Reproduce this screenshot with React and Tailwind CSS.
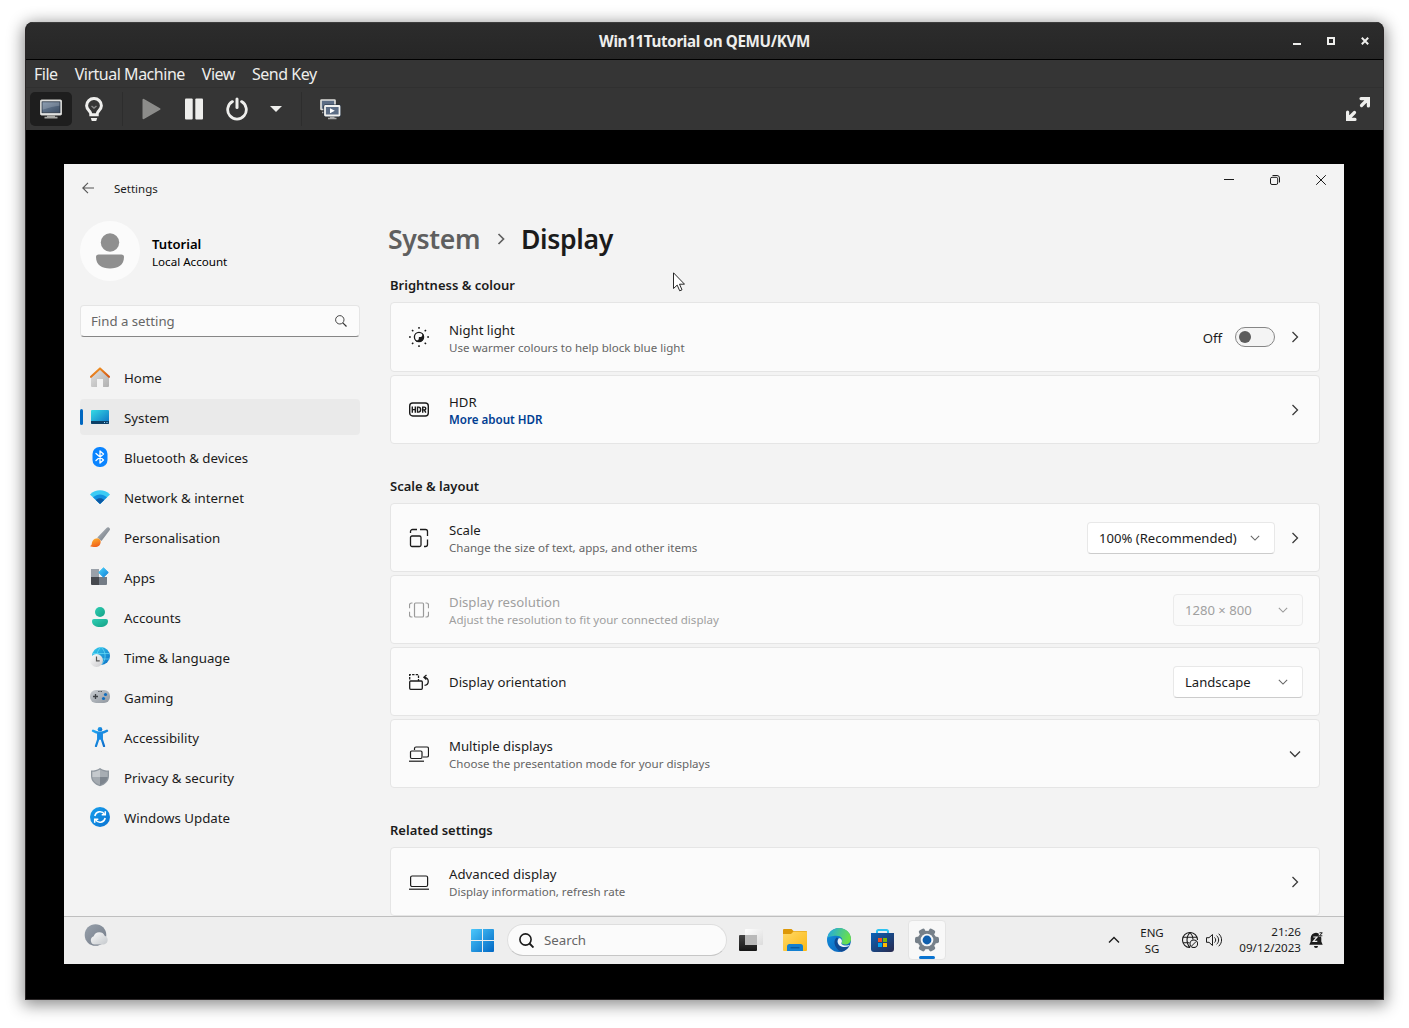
import React from "react";

const Svg = ({ s = 20, w, h, vb, className = "", children }) => (
  <svg width={w || s} height={h || s} viewBox={vb || `0 0 ${w || s} ${h || s}`} className={`block shrink-0 ${className}`} fill="none">
    {children}
  </svg>
);

const Grad = ({ id, from, to, x2 = 1, y2 = 1 }) => (
  <linearGradient id={id} x1="0" y1="0" x2={x2} y2={y2}>
    <stop offset="0" stopColor={from} />
    <stop offset="1" stopColor={to} />
  </linearGradient>
);

/* Host window: title bar, menu and toolbar */

function TitleBar() {
  return (
    <div className="flex h-[38px] shrink-0 items-center border-b border-black border-t border-t-[#3d3d3d] bg-linear-to-b from-[#2c2c2c] to-[#262626]">
      <div className="w-[120px]" />
      <div className="flex-1 text-center font-['Noto_Sans'] text-[15.2px] leading-5 font-bold tracking-[-0.35px] text-[#eeeeec]">Win11Tutorial on QEMU/KVM</div>
      <div className="flex w-[120px] justify-end gap-[26px] pr-3.5">
        <Svg s={8}><path d="M0 7h8" stroke="#eeeeec" strokeWidth="2" /></Svg>
        <Svg s={8}><path d="M1 1h6v6h-6z" stroke="#eeeeec" strokeWidth="2" /></Svg>
        <Svg s={8}><path d="M.8 .8l6.4 6.4M7.2 .8L.8 7.2" stroke="#eeeeec" strokeWidth="2" /></Svg>
      </div>
    </div>
  );
}

function MenuBar() {
  return (
    <div className="flex h-7 shrink-0 items-center gap-[17px] border-b border-[#303030] bg-[#353535] pl-2 font-['Noto_Sans'] text-[16px] leading-5 tracking-[-0.48px] text-[#eeeeec]">
      <span>File</span>
      <span>Virtual Machine</span>
      <span>View</span>
      <span>Send Key</span>
    </div>
  );
}

function ToolBar() {
  return (
    <div className="flex h-[42px] shrink-0 items-center bg-[#353535] pr-[13px] pl-1">
      <div className="flex h-[34px] w-[42px] items-center justify-center rounded-[5px] bg-[#1e1e1e]">
        <Svg w={22} h={20}>
          <defs><Grad id="mon" from="#7488a0" to="#3c4d63" /></defs>
          <rect x=".5" y="1" width="21" height="15" rx="1" fill="#f2f2f0" stroke="#d0d0cd" />
          <rect x="2" y="2.8" width="18" height="11" fill="url(#mon)" stroke="#2a3442" strokeWidth=".8" />
          <path d="M2.5 3.200h17v3.600c-5 .5-10 1.500-17 4z" fill="#fff" opacity=".18" />
          <path d="M7 16.500h8v1.200h2.500v1.800h-13v-1.800H7z" fill="#a9a9a6" />
        </Svg>
      </div>
      <Svg w={18} h={24} className="ml-[13px]">
        <path d="M9 1.600a7.200 7.200 0 0 0-7.400 7.200c0 3 2.200 4.500 3.500 6.200.6.900.7 1.800.7 2.800h6.400c0-1 .1-1.900.7-2.800 1.300-1.700 3.500-3.200 3.500-6.200A7.200 7.200 0 0 0 9 1.600z" stroke="#eeeeec" strokeWidth="3" />
        <path d="M6.500 9L9 11l2.500-2" stroke="#888" strokeWidth="1.500" />
        <path d="M5.800 21h6.400l-1 3H6.800z" fill="#eeeeec" />
      </Svg>
      <div className="ml-[19px] h-[34px] w-px bg-[#2d2d2d]" />
      <Svg w={20} h={22} className="ml-[19px]">
        <path d="M1.500 1.800v18.400L17.500 11z" fill="#8c8c8a" stroke="#8c8c8a" strokeWidth="2" strokeLinejoin="round" />
      </Svg>
      <Svg w={18} h={22} className="ml-[23px]">
        <rect y=".5" width="7.700" height="21" rx="1" fill="#eeeeec" />
        <rect x="10.300" y=".5" width="7.700" height="21" rx="1" fill="#eeeeec" />
      </Svg>
      <Svg w={22} h={24} className="ml-[23px]">
        <path d="M6.500 4.600a9.300 9.300 0 1 0 9 0" stroke="#eeeeec" strokeWidth="2.800" strokeLinecap="round" />
        <path d="M11 2v8.500" stroke="#eeeeec" strokeWidth="3" strokeLinecap="round" />
      </Svg>
      <Svg w={12} h={6} className="ml-[22px]"><path d="M0 0h12L6 6z" fill="#eeeeec" /></Svg>
      <div className="ml-[19px] h-[34px] w-px bg-[#2d2d2d]" />
      <Svg w={22} h={22} className="ml-[17px]">
        <rect x="2" y="2" width="14" height="9.500" rx=".5" fill="#5c6d85" stroke="#dededb" strokeWidth="1.700" />
        <path d="M3 14.500h3" stroke="#aaa" strokeWidth="1.500" />
        <rect x="6" y="8" width="14.500" height="9.500" rx=".5" fill="#5c6d85" stroke="#25303e" strokeWidth="3.200" />
        <rect x="6" y="8" width="14.500" height="9.500" rx=".5" fill="#5c6d85" stroke="#f2f2f0" strokeWidth="1.800" />
        <path d="M11 10.200v5l4.800-2.500z" fill="#fff" />
        <path d="M11 18.500h4.500v1.200h2V21.200H9v-1.500h2z" fill="#aaa" />
      </Svg>
      <Svg s={24} className="ml-auto">
        <path d="M15 1.600h7.400V9M21.500 2.500L15.500 8.500" stroke="#eeeeec" strokeWidth="3.200" strokeLinecap="round" />
        <path d="M1.600 15v7.400H9M2.500 21.500L8.500 15.500" stroke="#eeeeec" strokeWidth="3.200" strokeLinecap="round" />
      </Svg>
    </div>
  );
}

/* Sidebar icons */

const navIcons = {
  Home: (
    <Svg>
      <defs><Grad id="h1" from="#e2e2e2" to="#b0b0b0" /><Grad id="h2" from="#f59a23" to="#d25716" /></defs>
      <path d="M10 2l9 8v9a1 1 0 0 1-1 1h-5v-8H7v8H2a1 1 0 0 1-1-1v-9z" fill="url(#h1)" />
      <path d="M1 9.800L10 1.400l9 8.400" stroke="url(#h2)" strokeWidth="2.100" strokeLinecap="round" strokeLinejoin="round" />
    </Svg>
  ),
  System: (
    <Svg>
      <defs><Grad id="s1" from="#35dbe4" to="#0c6fc4" /></defs>
      <rect x="1" y="3" width="18" height="14" rx="1" fill="url(#s1)" />
      <path d="M1 14h18v2a1 1 0 0 1-1 1H2a1 1 0 0 1-1-1z" fill="#0c3f66" />
      <path d="M14 15.500h1M16.500 15.500h1" stroke="#9fdcff" />
    </Svg>
  ),
  "Bluetooth & devices": (
    <Svg>
      <rect x="2.500" width="15" height="20" rx="7" fill="#0a84ff" />
      <path d="M6 6.500l7.500 6.500L10 16V4l3.500 3L6 13.500" stroke="#fff" strokeWidth="1.300" strokeLinejoin="round" strokeLinecap="round" />
    </Svg>
  ),
  "Network & internet": (
    <Svg>
      <path d="M0 7.500C5.500 1.900 14.500 1.900 20 7.500L10 17z" fill="#3ccbf4" />
      <path d="M3 10.300c4-3.900 10-3.900 14 0L10 17z" fill="#1290df" />
      <path d="M5.800 13c2.400-2.300 6-2.300 8.400 0L10 17z" fill="#0c59a4" />
    </Svg>
  ),
  Personalisation: (
    <Svg>
      <defs><Grad id="p1" from="#b9bec4" to="#6b737c" /><Grad id="p2" from="#ffb52e" to="#f0641c" x2={0.4} /></defs>
      <path d="M18.800.5c1.200.7 1.500 1.600.8 2.800L11.500 14 7.300 10.500 16.500 1c.8-.8 1.500-1 2.300-.5z" fill="url(#p1)" />
      <path d="M6.500 11.500c1.300-.6 4.300 1 4.200 3.200C10.500 18 8.500 20 5 20c-2 0-4-.3-5-1 2-.5 1.500-1.500 2-3.500s2.200-4 4.500-4z" fill="url(#p2)" />
    </Svg>
  ),
  Apps: (
    <Svg>
      <defs><Grad id="a1" from="#48d2fa" to="#0f7fd8" /></defs>
      <path d="M1 2h8v8H1z" fill="#9aa1a9" /><path d="M1 10h8v8H2a1 1 0 0 1-1-1z" fill="#46494e" />
      <path d="M9 10h8v7a1 1 0 0 1-1 1H9z" fill="#747c86" />
      <path d="M13.500.8l4.800 4.700-4.800 4.700-4.800-4.700z" fill="url(#a1)" stroke="url(#a1)" strokeLinejoin="round" />
    </Svg>
  ),
  Accounts: (
    <Svg>
      <defs><Grad id="c1" from="#2fcfb4" to="#14a085" /></defs>
      <circle cx="10" cy="5" r="5" fill="url(#c1)" />
      <path d="M4 12h12a2 2 0 0 1 2 2c0 4-3.500 6-8 6s-8-2-8-6a2 2 0 0 1 2-2z" fill="url(#c1)" />
    </Svg>
  ),
  "Time & language": (
    <Svg>
      <defs><Grad id="t1" from="#38d0ee" to="#0b6cc4" /><Grad id="t2" from="#fff" to="#c9c9cc" /></defs>
      <circle cx="11" cy="9" r="9" fill="url(#t1)" />
      <path d="M3 6.500h16.500M3 12h16.500M11 0c-5.500 5-5.500 13 0 18M11 0c5.500 5 5.500 13 0 18" stroke="#6fe3fa" strokeWidth=".9" opacity=".7" />
      <circle cx="6.500" cy="13.500" r="6.500" fill="url(#t2)" />
      <path d="M6.500 9.500v4.300h3.200" stroke="#555" strokeWidth="1.200" />
    </Svg>
  ),
  Gaming: (
    <Svg>
      <defs><Grad id="g1" from="#c9cdd2" to="#8f969e" /></defs>
      <rect y="3" width="20" height="13" rx="6" fill="url(#g1)" />
      <path d="M5.500 7v5M3 9.500h5" stroke="#3d4146" strokeWidth="1.300" />
      <path d="M8.300 4.500h1.200M10.600 4.500h1.200" stroke="#3d4146" />
      <circle cx="15.500" cy="7.500" r="1.600" fill="#0f6cbd" /><circle cx="13.500" cy="11.500" r="1.600" fill="#0f6cbd" />
    </Svg>
  ),
  Accessibility: (
    <Svg>
      <defs><Grad id="ac" from="#22a6f2" to="#0a68c8" /></defs>
      <circle cx="10" cy="2.300" r="2.300" fill="url(#ac)" />
      <path d="M3 3.800c2 1.300 4.500 2 7 2s5-.7 7-2M8.300 6.500V12L6 19M11.700 6.500V12L14 19" stroke="url(#ac)" strokeWidth="2.300" strokeLinecap="round" strokeLinejoin="round" />
      <path d="M7.300 5.500h5.400v8L10 12.500l-2.700 1z" fill="#1a8be2" />
    </Svg>
  ),
  "Privacy & security": (
    <Svg>
      <path d="M10 1c2.500 2 5.500 2.500 9 2.500V9c0 5-3.500 8.500-9 10.300C4.500 17.500 1 14 1 9V3.500C4.500 3.500 7.500 3 10 1z" fill="#8e969e" />
      <path d="M10 2.500C7.500 4.200 5 4.700 2.300 4.800V10H10z" fill="#c5c9cd" />
      <path d="M10 2.500c2.500 1.700 5 2.200 7.700 2.300V10H10z" fill="#a7adb3" />
      <path d="M2.400 10H10v8C5.500 16.300 2.700 13.500 2.400 10z" fill="#a4aab0" />
      <path d="M17.600 10H10v8c4.500-1.700 7.300-4.500 7.600-8z" fill="#7d858e" />
    </Svg>
  ),
  "Windows Update": (
    <Svg>
      <defs><Grad id="w1" from="#18a0ec" to="#0a72d2" /></defs>
      <circle cx="10" cy="10" r="10" fill="url(#w1)" />
      <path d="M4.800 9A5.300 5.300 0 0 1 14.500 7.300M15.200 11a5.300 5.300 0 0 1-9.700 1.700" stroke="#fff" strokeWidth="1.500" />
      <path d="M15.300 4.200v3.600h-3.600M4.700 15.800v-3.600h3.600" stroke="#fff" strokeWidth="1.500" />
    </Svg>
  ),
};

function Sidebar() {
  return (
    <aside className="flex w-[280px] shrink-0 flex-col">
      <div className="flex h-[60px] items-center gap-3">
        <div className="flex size-[60px] items-center justify-center rounded-full bg-[#fbfbfb]">
          <Svg w={28} h={36}>
            <circle cx="14" cy="9.500" r="9.200" fill="#8f8f8f" />
            <path d="M2.500 21.500h23a2.500 2.500 0 0 1 2.500 2.500c0 8-6 11.500-14 11.500S0 32 0 24a2.500 2.500 0 0 1 2.500-2.500z" fill="#8f8f8f" />
          </Svg>
        </div>
        <div className="flex flex-col pt-[3px]">
          <span className="text-[13.100px] leading-[18px] font-semibold text-black">Tutorial</span>
          <span className="text-[11.600px] leading-[17px] text-black">Local Account</span>
        </div>
      </div>
      <div className="mt-6 flex h-8 items-center justify-between rounded-[4px] border border-[#e5e5e5] border-b-[#868686] bg-[#fbfbfb] pr-3 pl-2.5">
        <span className="text-[13.200px] leading-[18px] text-[#666]">Find a setting</span>
        <Svg s={12}><circle cx="4.800" cy="4.800" r="4.200" stroke="#444" /><path d="M7.800 7.800l3.700 3.700" stroke="#333" strokeWidth="1.200" /></Svg>
      </div>
      <nav className="mt-[22px] flex flex-col gap-1">
        {Object.keys(navIcons).map((label) => (
          <div key={label} className={`flex h-9 items-center rounded-[4px] ${label === "System" ? "bg-[#eaeaea]" : ""}`}>
            <div className={`h-4 w-[3px] rounded-full ${label === "System" ? "bg-[#0067c0]" : ""}`} />
            <div className="mr-3.5 ml-[7px]">{navIcons[label]}</div>
            <span className="pt-0.5 text-[13.300px] leading-[18px] whitespace-nowrap text-[#1b1b1b]">{label}</span>
          </div>
        ))}
      </nav>
    </aside>
  );
}

/* Settings cards */

const Right = () => <Svg w={16} h={12}><path d="M5.500 1l5 5-5 5" stroke="#3a3a3a" strokeWidth="1.300" /></Svg>;
const Down = ({ c = "#3a3a3a", s = 12 }) => <Svg s={s} vb="0 0 12 12"><path d="M1 3.500l5 5 5-5" stroke={c} strokeWidth="1.300" /></Svg>;

const Dropdown = ({ label, wide, disabled }) => (
  <div
    className={`flex h-8 items-center justify-between rounded-[4px] border pr-3.5 pl-[11px] ${wide ? "mr-3 w-[188px]" : "w-[130px]"} ${
      disabled ? "border-[#ebebeb] bg-[#fafafa] text-[#a0a0a0]" : "border-[#e8e8e8] border-b-[#cccccc] bg-white text-[#1b1b1b]"
    }`}
  >
    <span className="text-[13.100px] leading-[18px] whitespace-nowrap">{label}</span>
    <Down s={10} c={disabled ? "#9a9a9a" : "#666"} />
  </div>
);

function Card({ icon, title, sub, link, tall, disabled, children }) {
  return (
    <div className={`flex shrink-0 items-center rounded-[4px] border border-[#e5e5e5] bg-[#fbfbfb] pr-4 pl-[18px] ${tall ? "h-[70px]" : "h-[69px]"}`}>
      <div className={tall ? "" : "mt-px"}>{icon}</div>
      <div className={`ml-5 flex flex-1 flex-col ${sub || link ? "pt-0.5" : ""}`}>
        <span className={`text-[13.200px] leading-[18px] ${disabled ? "text-[#9f9f9f]" : "text-[#1b1b1b]"}`}>{title}</span>
        {sub && <span className={`text-[11.550px] leading-[17px] ${disabled ? "text-[#9f9f9f]" : "text-[#666]"}`}>{sub}</span>}
        {link && <span className="text-[11.600px] leading-[17px] font-semibold text-[#003e92]">{link}</span>}
      </div>
      {children}
    </div>
  );
}

const SectionTitle = ({ children }) => (
  <h2 className="flex h-[34px] shrink-0 items-center text-[13px] leading-5 font-semibold text-[#1b1b1b]">{children}</h2>
);

const K = "#1b1b1b";
const NightIcon = (
  <Svg>
    <circle cx="10" cy="10" r="4.600" stroke={K} strokeWidth="1.300" />
    <path d="M13.400 6A5 5 0 1 1 6 13.400c1 .3 2 .2 2.800-.2C10 12.500 9.800 11 9.900 9.900c1.100-.1 2.500.2 3.200-1 .5-.8.600-1.900.3-2.900z" fill={K} />
    <path d="M10 0v1.800M10 18.200V20M0 10h1.800M18.200 10H20M3 3l1.300 1.300M15.700 15.700L17 17M17 3l-1.300 1.300M4.300 15.700L3 17" stroke={K} strokeWidth="1.500" />
  </Svg>
);
const HdrIcon = (
  <Svg>
    <rect x=".7" y="3" width="18.600" height="13" rx="3" stroke={K} strokeWidth="1.400" />
    <path d="M3.300 6.500v6.200M6.300 6.500v6.200M3.300 9.600h3M8.500 7.100v5h1c2.800 0 2.800-5 0-5zM13.700 12.700V7.100h1.600c2 0 2 2.800 0 2.800h-1.600M15.300 9.900l1.500 2.800" stroke={K} strokeWidth="1.400" />
  </Svg>
);
const ScaleIcon = (
  <Svg>
    <rect x="1.500" y="8" width="10.500" height="10.500" rx="1.500" stroke={K} strokeWidth="1.300" />
    <path d="M1.500 5V3.500a2 2 0 0 1 2-2H8M11 1.500h5.500a2 2 0 0 1 2 2V8M18.500 11.500v5a2 2 0 0 1-2 2H15" stroke={K} strokeWidth="1.300" />
  </Svg>
);
const ResIcon = (
  <Svg>
    <rect x="5.500" y="3" width="9" height="14" rx="1" stroke="#9a9a9a" strokeWidth="1.200" />
    <path d="M3.500 3h-1a2 2 0 0 0-2 2v3.200M.5 11.800V15a2 2 0 0 0 2 2h1M16.500 3h1a2 2 0 0 1 2 2v3.200M19.500 11.800V15a2 2 0 0 1-2 2h-1" stroke="#9a9a9a" strokeWidth="1.200" />
  </Svg>
);
const OrientIcon = (
  <Svg>
    <rect x=".7" y="9" width="12.600" height="8.300" rx="1" stroke={K} strokeWidth="1.300" />
    <path d="M.7 7.500V2.700h8.800V9" stroke={K} strokeWidth="1.300" strokeDasharray="2.400 1.200" />
    <path d="M15.500 13.300c5-.5 5-7.300 0-8M17.500 3l-2.600 2.200 2.400 2.400" stroke={K} strokeWidth="1.300" />
  </Svg>
);
const MultiIcon = (
  <Svg>
    <path d="M5.500 6V4.500A1.500 1.500 0 0 1 7 3h11a1.500 1.500 0 0 1 1.500 1.500v7A1.500 1.500 0 0 1 18 13h-4" stroke={K} strokeWidth="1.200" />
    <rect x="1.500" y="7" width="11.500" height="7.500" rx="1.200" stroke={K} strokeWidth="1.200" />
    <path d="M0 17.200h15" stroke={K} strokeWidth="1.200" />
  </Svg>
);
const LaptopIcon = (
  <Svg>
    <rect x="1.600" y="4" width="17" height="10.500" rx="1.500" stroke={K} strokeWidth="1.200" />
    <path d="M0 17.200h20" stroke={K} strokeWidth="1.200" />
  </Svg>
);

function Main() {
  return (
    <main className="flex w-[930px] shrink-0 flex-col">
      <h1 className="-ml-0.5 flex h-[56px] shrink-0 items-center text-[26.600px] font-semibold tracking-[-0.35px] text-[#1b1b1b]">
        <span className="w-[92px] text-[#5f5f5f]">System</span>
        <Svg w={8} h={12} className="mr-4 mb-0.5 ml-[17px]"><path d="M1.500 1l5 5-5 5" stroke="#5f5f5f" strokeWidth="1.700" /></Svg>
        <span>Display</span>
      </h1>
      <SectionTitle>Brightness &amp; colour</SectionTitle>
      <div className="mb-[25px] flex flex-col gap-[3px]">
        <Card tall icon={NightIcon} title="Night light" sub="Use warmer colours to help block blue light">
          <span className="mr-[13px] pt-px text-[13.200px] leading-[18px] text-[#1b1b1b]">Off</span>
          <div className="mr-3 flex h-5 w-10 items-center rounded-full border border-[#868686] bg-[#f4f4f4] pl-[3px]">
            <div className="size-3 rounded-full bg-[#5c5c5c]" />
          </div>
          <Right />
        </Card>
        <Card icon={HdrIcon} title="HDR" link="More about HDR"><Right /></Card>
      </div>
      <SectionTitle>Scale &amp; layout</SectionTitle>
      <div className="mb-[25px] flex flex-col gap-[3px]">
        <Card icon={ScaleIcon} title="Scale" sub="Change the size of text, apps, and other items">
          <Dropdown wide label="100% (Recommended)" />
          <Right />
        </Card>
        <Card disabled icon={ResIcon} title="Display resolution" sub="Adjust the resolution to fit your connected display">
          <Dropdown disabled label="1280 × 800" />
        </Card>
        <Card icon={OrientIcon} title="Display orientation"><Dropdown label="Landscape" /></Card>
        <Card icon={MultiIcon} title="Multiple displays" sub="Choose the presentation mode for your displays">
          <div className="mr-0.5"><Down /></div>
        </Card>
      </div>
      <SectionTitle>Related settings</SectionTitle>
      <Card icon={LaptopIcon} title="Advanced display" sub="Display information, refresh rate"><Right /></Card>
    </main>
  );
}

function Caption() {
  return (
    <div className="flex h-12 shrink-0 pl-[18px]">
      <Svg w={12} h={12} className="mt-[18px]"><path d="M12 6H1M6 .8L.8 6 6 11.200" stroke="#555" strokeWidth="1.100" /></Svg>
      <span className="mt-4 ml-5 text-[11.500px] leading-[17px] text-[#1b1b1b]">Settings</span>
      <div className="mt-[11px] mr-[18px] ml-auto flex gap-9">
        <Svg s={10}><path d="M0 4.500h10" stroke="#1b1b1b" /></Svg>
        <Svg s={10}><rect x=".5" y="2.300" width="7.200" height="7.200" rx="1.500" stroke="#1b1b1b" /><path d="M2.500 .5H7A2.500 2.500 0 0 1 9.500 3v4.500" stroke="#1b1b1b" /></Svg>
        <Svg s={10}><path d="M.2 .2l9.600 9.600M9.800 .2L.2 9.800" stroke="#1b1b1b" /></Svg>
      </div>
    </div>
  );
}

/* Guest taskbar */

function TaskBar() {
  return (
    <div className="flex h-12 shrink-0 items-center border-t border-[#bfbfbf] bg-[#eeeeee] pb-px text-[#1b1b1b]">
      <Svg s={24} className="mb-2 ml-5">
        <defs><Grad id="mo" from="#97a0ab" to="#747c88" /><Grad id="cl" from="#fafafa" to="#c4c8cc" /></defs>
        <circle cx="11.500" cy="11" r="10.800" fill="url(#mo)" />
        <path d="M10.500 20.500a4.300 4.300 0 0 1-.8-8.300 6 6 0 0 1 11-.5 4.600 4.600 0 0 1-.7 8.800z" fill="url(#cl)" />
      </Svg>
      <Svg s={23} className="ml-[363px]">
        <defs><linearGradient id="win" gradientUnits="userSpaceOnUse" x1="0" y1="0" x2="23" y2="23"><stop stopColor="#4cc8fb" /><stop offset="1" stopColor="#0067c4" /></linearGradient></defs>
        <path d="M0 1a1 1 0 0 1 1-1h10v11H0zM12 0h10a1 1 0 0 1 1 1v10H12zM0 12h11v11H1a1 1 0 0 1-1-1zM12 12h11v10a1 1 0 0 1-1 1H12z" fill="url(#win)" />
      </Svg>
      <div className="ml-[13px] flex h-8 w-[220px] items-center rounded-full border border-[#dedede] border-b-[#c6c6c6] bg-[#fbfbfb] pl-[11px]">
        <Svg s={15}><circle cx="6.500" cy="6.500" r="5.600" stroke="#1b1b1b" strokeWidth="1.600" /><path d="M10.500 10.500l4 4" stroke="#1b1b1b" strokeWidth="1.900" /></Svg>
        <span className="ml-2.5 pt-px text-[13.300px] text-[#666]">Search</span>
      </div>
      <Svg w={24} h={22} className="ml-3">
        <defs><Grad id="tv" from="#444" to="#161616" x2={0} /><Grad id="tw" from="#fff" to="#dcdcdc" /></defs>
        <rect y="6" width="18" height="16" rx="1" fill="url(#tv)" />
        <rect x="6" width="18" height="16" rx="1" fill="url(#tw)" />
        <path d="M6 6h12v10H6z" fill="#b9b9b9" />
      </Svg>
      <Svg w={24} h={22} className="ml-5">
        <defs><Grad id="fo" from="#ffd968" to="#fbb813" /></defs>
        <path d="M0 1a1 1 0 0 1 1-1h7.500L10.500 2H23a1 1 0 0 1 1 1v6H0z" fill="#dd9808" />
        <path d="M0 5h8l2.500-2.500H23a1 1 0 0 1 1 1v17.500a1 1 0 0 1-1 1H1a1 1 0 0 1-1-1z" fill="url(#fo)" />
        <path d="M4 22v-4.500A2.500 2.500 0 0 1 6.500 15h11a2.500 2.500 0 0 1 2.500 2.500V22z" fill="#1480d0" />
        <path d="M7.500 18.700h9" stroke="#0b5ba0" strokeWidth="1.500" />
      </Svg>
      <Svg s={24} className="ml-5">
        <defs>
          <Grad id="e1" from="#1fa7e8" to="#69e04c" y2={0.3} />
          <Grad id="e2" from="#1494e0" to="#0a5bb5" />
        </defs>
        <circle cx="12" cy="12" r="12" fill="url(#e2)" />
        <path d="M.5 9.500C2 3.500 6.500 0 12 0c7 0 12 5 12 11 0 3.500-2.800 5.500-6 5.500-3 0-4-1.200-3.300-2.300C16.500 11 14 7.700 9.500 7.700 5 7.700 1.500 9 .5 9.500z" fill="url(#e1)" />
        <path d="M9.500 9.500c-2 2-2.800 5-1.200 8.500 1.300 3 4 5 6.200 5.700 3.200-.6 6.200-2.700 7.700-5.700-3 1.600-7.800 1.500-10.200-.8-2-2-2.200-5-.5-7.200z" fill="#114a93" />
        <path d="M11.800 10.300c-1.800 2-1.600 5 .4 6.900 2.200 2 6.500 2.400 10 .8.600-.5-.2-1-.8-.8-2.200.7-5.500.5-6.700-1-.5-.7-.4-1.300 0-2 .9-1.700-.7-4.600-2.900-3.900z" fill="#f1f4f8" />
      </Svg>
      <Svg w={23} h={23} className="ml-5">
        <defs><Grad id="st" from="#0a63b8" to="#29294d" /></defs>
        <path d="M6 5V2.500A1.500 1.500 0 0 1 7.500 1h8A1.500 1.500 0 0 1 17 2.500V5" stroke="#2cc3f2" strokeWidth="2" />
        <path d="M0 4h23v16a3 3 0 0 1-3 3H3a3 3 0 0 1-3-3z" fill="url(#st)" />
        <path d="M7 9h4v4H7z" fill="#f25022" /><path d="M12 9h4v4h-4z" fill="#7fba00" />
        <path d="M7 14h4v4H7z" fill="#00a4ef" /><path d="M12 14h4v4h-4z" fill="#ffb900" />
      </Svg>
      <div className="ml-3.5 flex h-10 w-[38px] flex-col items-center rounded-[4px] border border-[#e4e4e4] bg-[#f8f8f8] pt-[7px]">
        <Svg s={24}>
          <g fill="#76808a">
            {[0, 60, 120].map((a) => <rect key={a} x="8.700" y="0" width="6.600" height="24" rx="2" transform={`rotate(${a + 30} 12 12)`} />)}
            <circle cx="12" cy="12" r="9.300" />
          </g>
          <circle cx="12" cy="12" r="6.300" fill="#f4f6f8" />
          <circle cx="12" cy="12" r="4.400" fill="#0f5fae" />
        </Svg>
        <div className="mt-1 h-[3px] w-4 rounded-full bg-[#0a74d1]" />
      </div>
      <Svg w={12} h={8} className="ml-[162px]"><path d="M1 6.500l5-5 5 5" stroke="#1b1b1b" strokeWidth="1.400" /></Svg>
      <div className="ml-5 w-6 pt-0.5 text-center text-[11.500px] leading-4 whitespace-nowrap">ENG<br />SG</div>
      <Svg s={16} className="ml-[18px]">
        <path d="M8 .5a7.500 7.500 0 1 0 0 15M8 .5A7.500 7.500 0 0 1 15.500 8M8 .5c-4 4-4 11 0 15M8 .5c2 2 3 4.500 3 7M1 5.300h14M1 10.700h6.500" stroke="#1b1b1b" strokeWidth="1.050" />
        <circle cx="11.800" cy="11.800" r="3.800" stroke="#1b1b1b" strokeWidth="1.050" fill="#eee" /><path d="M9.300 14.300l5-5" stroke="#1b1b1b" />
      </Svg>
      <Svg w={17} h={16} className="ml-2">
        <path d="M.5 5.700H3l3.500-3.200v11L3 10.300H.5z" stroke="#1b1b1b" strokeLinejoin="round" />
        <path d="M8.800 5.700c1.300 1.300 1.300 3.300 0 4.600M10.900 3.900c2.400 2.300 2.400 5.900 0 8.200M13 2c3.500 3.400 3.500 8.600 0 12" stroke="#1b1b1b" strokeLinecap="round" />
      </Svg>
      <div className="ml-[15px] flex w-[63px] flex-col items-end text-[11.600px] leading-4 whitespace-nowrap"><span>21:26</span><span>09/12/2023</span></div>
      <Svg w={14} h={16} className="ml-2">
        <path d="M7 .8a5.300 5.300 0 0 0-5.300 5.300V9.500L.3 12.800h13.400l-1.400-3.300V6.100A5.300 5.300 0 0 0 7 .8z" fill="#1b1b1b" />
        <path d="M5 14h4a2 2 0 0 1-4 0z" fill="#1b1b1b" />
        <path d="M9.800 0H14v4.600H9.800z" fill="#eee" /><path d="M10.500 .8h2.800l-2.800 3h2.800" stroke="#1b1b1b" />
        <path d="M4.300 5h3.800L4.300 9.400h4" stroke="#eee" strokeWidth="1.200" />
      </Svg>
    </div>
  );
}

export default function App() {
  return (
    <div className="h-[1028px] w-[1409px] overflow-hidden bg-white pt-[22px] pl-[25px]">
      <div className="flex h-[978px] w-[1359px] flex-col overflow-hidden rounded-t-[8px] border border-t-0 border-[#2a2627] bg-black shadow-[0_3px_16px_2px_rgba(0,0,0,0.45)]">
        <TitleBar />
        <MenuBar />
        <ToolBar />
        <div className="relative mt-[34px] ml-[38px] flex h-[800px] w-[1280px] shrink-0 flex-col bg-[#f3f3f3] font-['Noto_Sans']">
          <div className="flex h-[752px] flex-col overflow-hidden">
            <Caption />
            <div className="flex gap-[30px] pl-4">
              <div className="pt-[9px]"><Sidebar /></div>
              <Main />
            </div>
          </div>
          <TaskBar />
          <Svg w={12} h={20} className="absolute top-[108px] left-[609px]">
            <path d="M.5 .8v15.700l3.700-3.400 2.500 5.700 2.300-1-2.500-5.600h5z" fill="#fff" stroke="#111" strokeWidth=".9" />
          </Svg>
        </div>
      </div>
    </div>
  );
}
